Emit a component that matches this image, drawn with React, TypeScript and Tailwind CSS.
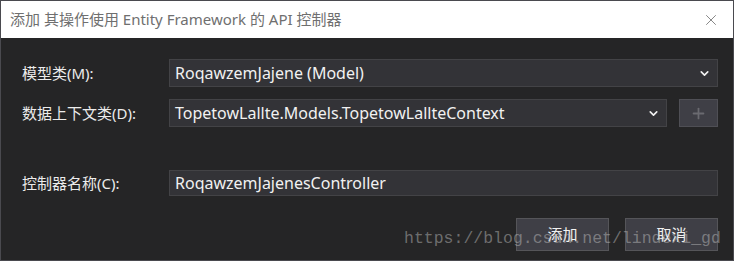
import { ChevronDown, Plus, X } from 'lucide-react';

const ui = { fontFamily: '"Noto Sans", "Noto Sans CJK SC", sans-serif' };

function Select({ value, className = '' }: { value: string; className?: string }) {
  return (
    <div
      className={`h-[28px] flex items-center justify-between pl-[5px] pr-[6px] bg-[#333337] border border-[#434346] text-[#f1f1f1] text-[16px] ${className}`}
    >
      <span className="leading-none">{value}</span>
      <ChevronDown size={13} strokeWidth={3} className="text-[#f1f1f1]" />
    </div>
  );
}

export default function App() {
  return (
    <div className="w-[734px] h-[261px] border border-[#4a4a4f] flex flex-col relative overflow-hidden" style={ui}>
      {/* title bar */}
      <div className="h-[37px] bg-white flex items-center justify-between pl-[9px] pr-[13px] shrink-0">
        <span className="text-[15px] text-[#6f6f6f]">添加 其操作使用 Entity Framework 的 API 控制器</span>
        <X size={18} strokeWidth={1.2} className="text-[#7a7a7a]" />
      </div>

      {/* body */}
      <div className="flex-1 bg-[#252526] pl-[21px] pr-[15px] pt-[21px]">
        <div className="flex items-center">
          <span className="w-[147px] text-[15px] text-[#ececec]">模型类(M):</span>
          <Select value="RoqawzemJajene (Model)" className="flex-1" />
        </div>

        <div className="flex items-center mt-[12px]">
          <span className="w-[147px] text-[15px] text-[#ececec]">数据上下文类(D):</span>
          <Select value="TopetowLallte.Models.TopetowLallteContext" className="flex-1" />
          <div className="ml-[12px] w-[39px] h-[28px] bg-[#3f3f46] border border-[#4f4f55] flex items-center justify-center">
            <Plus size={17} strokeWidth={2.5} className="text-[#6a6a70]" />
          </div>
        </div>

        <div className="flex items-center mt-[43px]">
          <span className="w-[147px] text-[15px] text-[#ececec]">控制器名称(C):</span>
          <div className="flex-1 h-[26px] flex items-center pl-[5px] bg-[#333337] border border-[#434346] text-[#f1f1f1] text-[16px]">
            RoqawzemJajenesController
          </div>
        </div>

        <div className="flex justify-end gap-[16px] mt-[22px]">
          <button className="w-[93px] h-[33px] bg-[#3f3f46] border border-[#555559] text-[#f1f1f1] text-[15px]">添加</button>
          <button className="w-[93px] h-[33px] bg-[#3f3f46] border border-[#555559] text-[#f1f1f1] text-[15px]">取消</button>
        </div>
      </div>

      {/* watermark */}
      <span
        className="absolute left-[403px] top-[226px] text-[16.5px] leading-[24px] text-[#c8c8c8]/45 whitespace-nowrap pointer-events-none select-none"
        style={{ fontFamily: '"Liberation Mono", monospace' }}
      >
        https://blog.csdn.net/lindexi_gd
      </span>
    </div>
  );
}
